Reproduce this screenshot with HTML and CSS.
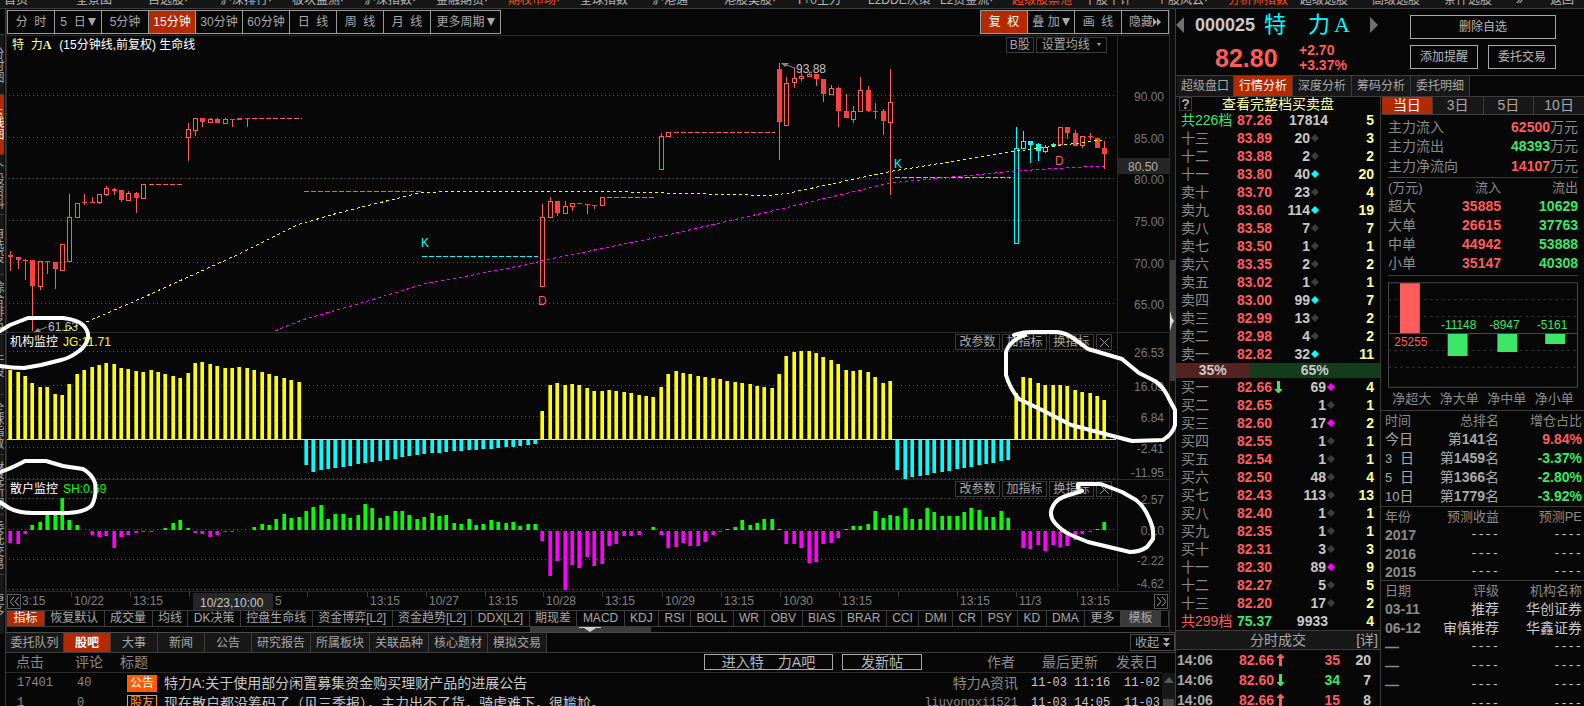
FILE: index.html
```html
<!DOCTYPE html>
<html lang="zh-CN">
<head>
<meta charset="utf-8">
<title>特力A 000025</title>
<link rel="stylesheet" href="styles.css">
</head>
<body>
<div class="app">
  <nav class="menu">
    <a href="#">首页</a><a href="#">全景图</a><a href="#">自选股·</a><a href="#">沪深排行·</a><a href="#">板块监测·</a><a href="#">沪深指数·</a><a href="#">金融期货·</a><a href="#" class="hot">期权市场·</a><a href="#">全球指数</a><a href="#">沪港通</a><a href="#">港股美股·</a><a href="#">T+0主力</a><a href="#">L2DDE决策</a><a href="#">L2资金流·</a><a href="#" class="hot">超级股票池</a><a href="#">千股千评</a><a href="#">个股风云·</a><a href="#" class="hot">分析师指数</a><a href="#">超级选股</a><a href="#">高级选股</a><a href="#">条件选股</a><a href="#" class="narrow">»</a><a href="#" class="narrow">返回</a>
  </nav>

  <div class="body">
    <aside class="side">
      <div class="side-gap"></div>
      <button>分时图</button><button class="on">K线图</button><button>个股资料</button><button>自选股</button><button>综合排名</button><button>牛股</button><button>全球指数</button><button>财经新闻</button><button>委托交易</button><button>更多</button>
    </aside>

    <main class="center">
      <div class="upper">
        <div class="charts">
          <div class="toolbar">
            <div class="btns periods">
              <button>分&nbsp; 时</button><button>5 &nbsp;日<i class="tri"></i></button><button>5分钟</button><button class="on">15分钟</button><button>30分钟</button><button>60分钟</button><button>日&nbsp; 线</button><button>周&nbsp; 线</button><button>月&nbsp; 线</button><button class="wide">更多周期<i class="tri"></i></button>
            </div>
            <div class="btns">
              <button class="on">复&nbsp; 权</button><button>叠 加<i class="tri"></i></button><button>画&nbsp; 线</button><button>隐藏<i class="tri right"></i><i class="tri right"></i></button>
            </div>
          </div>

          <section class="panel">
            <svg class="plot price" id="price" viewBox="7 36 1110 296" preserveAspectRatio="none"></svg>
            <svg class="axis price" viewBox="1118 36 51 296">
              <rect x="1118" y="158" width="51" height="16" fill="#262626"/>
              <g text-anchor="end">
                <text x="1164" y="101">90.00</text><text x="1164" y="143">85.00</text><text x="1158" y="171" fill="#b0b0b0">80.50</text><text x="1164" y="184">80.00</text><text x="1164" y="226">75.00</text><text x="1164" y="268">70.00</text><text x="1164" y="309">65.00</text>
              </g>
            </svg>
            <h2 class="panel-title"><span class="pale">特&nbsp; 力<b>A</b></span>(15分钟线,前复权) 生命线</h2>
            <div class="panel-tools first"><button>B股</button><button>设置均线 <i class="tri small"></i></button></div>
          </section>

          <section class="panel">
            <svg class="plot inst" id="inst" viewBox="7 333 1110 146" preserveAspectRatio="none"></svg>
            <svg class="axis inst" viewBox="1118 333 51 146">
              <g text-anchor="end"><text x="1164" y="357">26.53</text><text x="1164" y="391">16.09</text><text x="1164" y="422">6.84</text><text x="1164" y="453">-2.41</text><text x="1164" y="477">-11.95</text></g>
            </svg>
            <h2 class="panel-title low">机构监控<span class="yellow">JG:11.71</span></h2>
            <div class="panel-tools"><button>改参数</button><button>加指标</button><button>换指标</button><button class="x" aria-label="关闭"><svg width="9" height="9"><path d="M0 0L9 9M9 0L0 9" stroke="#999" fill="none"/></svg></button></div>
          </section>

          <section class="panel">
            <svg class="plot retail" id="retail" viewBox="7 480 1110 111" preserveAspectRatio="none"></svg>
            <svg class="axis retail" viewBox="1118 480 51 111">
              <g text-anchor="end"><text x="1164" y="504">2.57</text><text x="1164" y="535">0.10</text><text x="1164" y="565">-2.22</text><text x="1164" y="588">-4.62</text></g>
            </svg>
            <h2 class="panel-title low">散户监控<span class="green">SH:0.69</span></h2>
            <div class="panel-tools"><button>改参数</button><button>加指标</button><button>换指标</button><button class="x" aria-label="关闭"><svg width="9" height="9"><path d="M0 0L9 9M9 0L0 9" stroke="#999" fill="none"/></svg></button></div>
          </section>

          <div class="timeline">
            <svg id="time" viewBox="7 592 1162 18" preserveAspectRatio="none"></svg>
            <button class="prev" aria-label="向前"><svg width="9" height="9"><path d="M4 0L0 4.500L4 9M9 0L5 4.500L9 9" stroke="#aaa" fill="none"/></svg></button>
            <button class="next" aria-label="向后"><svg width="9" height="9"><path d="M0 0L4 4.500L0 9M5 0L9 4.500L5 9" stroke="#aaa" fill="none"/></svg></button>
          </div>

          <div class="indicators">
            <button class="on">指标</button><button>恢复默认</button><button>成交量</button><button>均线</button><button>DK决策</button><button>控盘生命线</button><button>资金博弈[L2]</button><button>资金趋势[L2]</button><button>DDX[L2]</button><button>期现差</button><button>MACD</button><button>KDJ</button><button>RSI</button><button>BOLL</button><button>WR</button><button>OBV</button><button>BIAS</button><button>BRAR</button><button>CCI</button><button>DMI</button><button>CR</button><button>PSY</button><button>KD</button><button>DMA</button><button>更多</button><button class="tpl">模板</button>
          </div>
          <div class="grip"><span><svg width="22" height="5"><path d="M0 0H22V1H17L11 5L5 1H0Z" fill="#ccc"/></svg></span></div>
        </div>
        <div class="vbar"><span></span><svg width="4" height="20"><path d="M0 0L2 7L4 10L2 13L0 20Z" fill="#ddd"/></svg></div>
      </div>

      <section class="news">
        <div class="news-tabs">
          <button class="w57">委托队列</button><button class="on w47">股吧</button><button class="w47">大事</button><button class="w47">新闻</button><button class="w47">公告</button><button>研究报告</button><button>所属板块</button><button>关联品种</button><button>核心题材</button><button>模拟交易</button>
          <button class="fold">收起<svg width="7" height="10"><path d="M0 0H7L3.500 4ZM0 5H7L3.500 9Z" fill="#aaa"/></svg></button>
        </div>
        <div class="news-body">
          <table>
            <thead><tr><th class="n1">点击</th><th class="n2">评论</th><th><div class="title-head">标题<span><button class="enter">进入特　力A吧</button><button class="post">发新帖</button></span></div></th><th class="n4">作者</th><th class="n5">最后更新</th><th class="n6">发表日</th></tr></thead>
            <tbody>
              <tr><td>17401</td><td>40</td><td class="t"><span class="tag solid">公告</span>特力A:关于使用部分闲置募集资金购买理财产品的进展公告</td><td>特力A资讯</td><td class="w">11-03 11:16</td><td class="w">11-02</td></tr>
              <tr><td>1</td><td>0</td><td class="t"><span class="tag">股友</span>现在散户都没筹码了（见三季报），主力出不了货，骑虎难下，很尴尬。</td><td class="m">liuyongxi1521</td><td class="w">11-03 14:05</td><td class="w">11-03</td></tr>
            </tbody>
          </table>
          <div class="scroll"><i></i><span></span></div>
        </div>
      </section>
    </main>

    <aside class="quote">
      <header class="quote-head">
        <div class="ident">
          <div class="name"><i class="nav-l"></i><span class="code">000025</span><span class="cn">特　力<b>A</b></span><i class="nav-r"></i></div>
          <div class="px"><strong>82.80</strong><span>+2.70<br>+3.37%</span></div>
        </div>
        <div class="acts"><button class="full">删除自选</button><button>添加提醒</button><button>委托交易</button></div>
      </header>
      <div class="qtabs"><button>超级盘口</button><button class="on">行情分析</button><button>深度分析</button><button>筹码分析</button><button>委托明细</button></div>
      <div class="cols">
        <div class="book">
          <div class="book-title"><button aria-label="帮助">?</button><a href="#">查看完整档买卖盘</a></div>
          <table>
            <tr><td class="g s">共226档</td><td class="r">87.26</td><td></td><td class="all" colspan="2">17814</td><td>5</td></tr>
            <tr><td>十三</td><td class="r">83.89</td><td></td><td>20</td><td><i></i></td><td>3</td></tr>
            <tr><td>十二</td><td class="r">83.88</td><td></td><td>2</td><td><i></i></td><td>2</td></tr>
            <tr><td>十一</td><td class="r">83.80</td><td></td><td>40</td><td><i class="c"></i></td><td>20</td></tr>
            <tr><td>卖十</td><td class="r">83.70</td><td></td><td>23</td><td><i></i></td><td>4</td></tr>
            <tr><td>卖九</td><td class="r">83.60</td><td></td><td>114</td><td><i class="c"></i></td><td>19</td></tr>
            <tr><td>卖八</td><td class="r">83.58</td><td></td><td>7</td><td><i></i></td><td>7</td></tr>
            <tr><td>卖七</td><td class="r">83.50</td><td></td><td>1</td><td><i></i></td><td>1</td></tr>
            <tr><td>卖六</td><td class="r">83.35</td><td></td><td>2</td><td><i></i></td><td>2</td></tr>
            <tr><td>卖五</td><td class="r">83.02</td><td></td><td>1</td><td><i></i></td><td>1</td></tr>
            <tr><td>卖四</td><td class="r">83.00</td><td></td><td>99</td><td><i class="c"></i></td><td>7</td></tr>
            <tr><td>卖三</td><td class="r">82.99</td><td></td><td>13</td><td><i></i></td><td>2</td></tr>
            <tr><td>卖二</td><td class="r">82.98</td><td></td><td>4</td><td><i></i></td><td>2</td></tr>
            <tr><td>卖一</td><td class="r">82.82</td><td></td><td>32</td><td><i class="c"></i></td><td>11</td></tr>
          </table>
          <div class="ratio"><span class="sell">35%</span><span class="buy">65%</span></div>
          <table>
            <tr><td>买一</td><td class="r">82.66</td><td><svg class="arr" viewBox="0 0 7 12"><path d="M2 0H5V8H7V9L4 12H3L0 9V8H2Z" fill="#3ce666"/></svg></td><td>69</td><td><i class="m"></i></td><td>4</td></tr>
            <tr><td>买二</td><td class="r">82.65</td><td></td><td>1</td><td><i></i></td><td>1</td></tr>
            <tr><td>买三</td><td class="r">82.60</td><td></td><td>17</td><td><i class="m"></i></td><td>2</td></tr>
            <tr><td>买四</td><td class="r">82.55</td><td></td><td>1</td><td><i></i></td><td>1</td></tr>
            <tr><td>买五</td><td class="r">82.54</td><td></td><td>1</td><td><i></i></td><td>1</td></tr>
            <tr><td>买六</td><td class="r">82.50</td><td></td><td>48</td><td><i></i></td><td>4</td></tr>
            <tr><td>买七</td><td class="r">82.43</td><td></td><td>113</td><td><i></i></td><td>13</td></tr>
            <tr><td>买八</td><td class="r">82.40</td><td></td><td>1</td><td><i></i></td><td>1</td></tr>
            <tr><td>买九</td><td class="r">82.35</td><td></td><td>1</td><td><i></i></td><td>1</td></tr>
            <tr><td>买十</td><td class="r">82.31</td><td></td><td>3</td><td><i></i></td><td>3</td></tr>
            <tr><td>十一</td><td class="r">82.30</td><td></td><td>89</td><td><i class="m"></i></td><td>9</td></tr>
            <tr><td>十二</td><td class="r">82.27</td><td></td><td>5</td><td><i></i></td><td>5</td></tr>
            <tr><td>十三</td><td class="r">82.20</td><td></td><td>17</td><td><i></i></td><td>2</td></tr>
            <tr><td class="r s">共299档</td><td class="g">75.37</td><td></td><td class="all" colspan="2">9933</td><td>4</td></tr>
          </table>
          <div class="tick-head"><span>分时成交</span><a href="#">[详]</a></div>
          <table class="ticks">
            <tr><td>14:06</td><td class="r">82.66</td><td><svg class="arr" viewBox="0 0 7 12"><path d="M2 12H5V4H7V3L4 0H3L0 3V4H2Z" fill="#ff5c5c"/></svg></td><td class="r">35</td><td>20</td></tr>
            <tr><td>14:06</td><td class="r">82.60</td><td><svg class="arr" viewBox="0 0 7 12"><path d="M2 0H5V8H7V9L4 12H3L0 9V8H2Z" fill="#3ce666"/></svg></td><td class="g">34</td><td>7</td></tr>
            <tr><td>14:06</td><td class="r">82.66</td><td><svg class="arr" viewBox="0 0 7 12"><path d="M2 12H5V4H7V3L4 0H3L0 3V4H2Z" fill="#ff5c5c"/></svg></td><td class="r">15</td><td>8</td></tr>
          </table>
        </div>

        <div class="flow">
          <div class="dtabs"><button class="on">当日</button><button>3日</button><button>5日</button><button>10日</button></div>
          <dl class="main-flow">
            <div><dt>主力流入</dt><dd><b class="r">62500</b>万元</dd></div>
            <div><dt>主力流出</dt><dd><b class="g">48393</b>万元</dd></div>
            <div class="net"><dt>主力净流向</dt><dd><b class="r">14107</b>万元</dd></div>
          </dl>
          <table class="sizes">
            <tr><th>(万元)</th><th>流入</th><th>流出</th></tr>
            <tr><td>超大</td><td class="r">35885</td><td class="g">10629</td></tr>
            <tr><td>大单</td><td class="r">26615</td><td class="g">37763</td></tr>
            <tr><td>中单</td><td class="r">44942</td><td class="g">53888</td></tr>
            <tr><td>小单</td><td class="r">35147</td><td class="g">40308</td></tr>
          </table>
          <div class="net-chart">
            <svg viewBox="1388 282 191 106">
              <path d="M1388 299.500H1578M1388 316.500H1578M1388 350.500H1578M1388 367.500H1578" stroke="#333" stroke-dasharray="3 3" fill="none"/>
              <path d="M1388.500 282.500H1578.500V387.500H1388.500ZM1388 333.500H1578" stroke="#4a4a4a" fill="none"/>
              <rect x="1400" y="283" width="20" height="50" fill="#ff5c5c"/>
              <path d="M1448 334H1468V356H1448ZM1498 334H1518V352H1498ZM1546 334H1566V344H1546Z" fill="#3ce666"/>
              <g text-anchor="middle" fill="#3ce666"><text x="1411" y="346" fill="#ff5c5c">25255</text><text x="1459" y="329">-11148</text><text x="1505" y="329">-8947</text><text x="1553" y="329">-5161</text></g>
            </svg>
            <div class="net-labels"><span>净超大</span><span>净大单</span><span>净中单</span><span>净小单</span></div>
          </div>
          <table class="rank">
            <tr><th>时间</th><th>总排名</th><th>增仓占比</th></tr>
            <tr><td>今日</td><td>第<b>141</b>名</td><td class="r">9.84%</td></tr>
            <tr><td><small>3</small>&nbsp; 日</td><td>第<b>1459</b>名</td><td class="g">-3.37%</td></tr>
            <tr><td><small>5</small>&nbsp; 日</td><td>第<b>1366</b>名</td><td class="g">-2.80%</td></tr>
            <tr><td><small>10</small>日</td><td>第<b>1779</b>名</td><td class="g">-3.92%</td></tr>
          </table>
          <table class="years">
            <tr><th>年份</th><th>预测收益</th><th>预测PE</th></tr>
            <tr><td>2017</td><td>----</td><td>----</td></tr>
            <tr><td>2016</td><td>----</td><td>----</td></tr>
            <tr class="end"><td>2015</td><td>----</td><td>----</td></tr>
          </table>
          <table class="rates">
            <tr><th>日期</th><th>评级</th><th>机构名称</th></tr>
            <tr><td>03-11</td><td>推荐</td><td>华创证券</td></tr>
            <tr><td>06-12</td><td>审慎推荐</td><td>华鑫证券</td></tr>
            <tr class="none"><td>—</td><td>----</td><td>----</td></tr>
            <tr class="none"><td>—</td><td>----</td><td>----</td></tr>
            <tr class="none"><td>—</td><td>----</td><td>----</td></tr>
            <tr class="none"><td></td><td>----</td><td>----</td></tr>
          </table>
        </div>
      </div>
    </aside>
  </div>

  <svg class="marks" viewBox="0 0 1584 706">
    <path d="M0 331L10 325L28 318L63 318Q78 320 83 325Q89 331 88 338Q86 346 79 351Q70 358 61 360L41 365L24 368Q12 368 0 366"/>
    <path d="M0 472Q10 469 25 461L46 461L63 466L83 469Q92 474 95 483Q97 495 92 505Q86 512 68 513L34 513Q18 513 9 508L0 502"/>
    <path d="M1014 335Q1022 332 1032 332L1057 332Q1066 333 1073 338L1088 349L1122 359L1139 373L1155 381Q1162 386 1166 393L1175 410L1175 425Q1173 434 1163 440L1132 441L1109 435L1071 425L1046 412L1019 399Q1010 389 1006 375L1006 352Q1009 341 1025 335"/>
    <path d="M1082 491L1069 495Q1057 498 1053 506Q1048 515 1055 523Q1062 531 1071 535L1088 542L1130 552Q1140 552 1147 547L1153 539Q1154 528 1149 518Q1144 506 1136 500L1122 492L1101 484L1078 484V488"/>
  </svg>
</div>
<script src="chart.js"></script>
</body>
</html>
```
FILE: styles.css
```css
* { box-sizing: border-box; }
body {
  margin: 0;
  background: #070707;
  color: #8a8a8a;
  font: 12px/16px "Liberation Sans", "Noto Sans CJK SC", sans-serif;
}
button {
  margin: 0;
  padding: 0;
  border: 0;
  background: none;
  color: #a8a8a8;
  font: inherit;
  white-space: nowrap;
}
a { color: inherit; text-decoration: none; }
i { font-style: normal; }
table { border-collapse: collapse; table-layout: fixed; width: 100%; }
td, th { padding: 0; font-weight: normal; white-space: nowrap; }
svg { display: block; }
svg text { font: 12px "Liberation Sans", sans-serif; }

.app { position: relative; display: flex; flex-direction: column; height: 100vh; min-width: 1200px; overflow: hidden; }

.menu {
  flex: none;
  display: flex;
  align-items: flex-end;
  height: 9px;
  padding-left: 4px;
  overflow: hidden;
  background: #161616;
  border-bottom: 1px solid #3c3c3c;
  color: #b8b8b8;
}
.menu a { flex: 0 1 72px; white-space: nowrap; }
.menu .hot { color: #ff4a10; }
.menu .narrow { flex-basis: 34px; }

.body { flex: 1; display: flex; min-height: 0; }

.side { flex: none; width: 6px; overflow: hidden; border-right: 1px solid #3c3c3c; }
.side-gap { height: 25px; }
.side button {
  display: block;
  width: 14px;
  height: 60px;
  margin-left: -10px;
  background: #181818;
  border-top: 1px solid #3c3c3c;
  writing-mode: vertical-rl;
  line-height: 12px;
}
.side .on { background: #b42a00; color: #fff; }

.center { flex: 1; min-width: 0; display: flex; flex-direction: column; }
.upper { flex: none; display: flex; }
.charts { flex: 1; min-width: 0; border-left: 1px solid #2a2a2a; }

.toolbar { display: flex; justify-content: space-between; height: 27px; padding-top: 1px; border-bottom: 1px solid #2a2a2a; }
.btns { display: flex; height: 24px; border: 1px solid #9a9a9a; }
.btns button { display: flex; align-items: center; justify-content: center; width: 47px; border-left: 1px solid #9a9a9a; }
.btns button:first-child { border-left: 0; width: 46px; }
.btns .wide { width: 70px; }
.btns .on, .indicators .on, .news-tabs .on, .qtabs .on, .dtabs .on { background: #b42a00; color: #fff; }
.tri { display: inline-block; margin-left: 2px; border: 4px solid transparent; border-top: 8px solid #a8a8a8; border-bottom: 0; }
.tri.right { margin-left: 0; border: 4px solid transparent; border-left: 4px solid #a8a8a8; border-right: 0; }
.tri.small { margin: 0 0 3px 4px; border-width: 3px 2px 0; }

.panel { position: relative; display: flex; }
.plot { flex: 1; min-width: 0; }
.plot polyline { shape-rendering: crispEdges; }
.axis { flex: none; width: 52px; border-left: 1px solid #2a2a2a; }
.axis text { fill: #787878; }
.axis text[fill] { fill: #b0b0b0; }
.price { height: 296px; }
.inst { height: 147px; border-top: 1px solid #2a2a2a; }
.retail { height: 112px; border-top: 1px solid #2a2a2a; }
.panel-title { position: absolute; top: 1px; left: 5px; margin: 0; color: #fff; font: inherit; }
.panel-title.low { top: 2px; left: 3px; }
.panel-title span { margin-left: 5px; }
.panel-title .pale { margin: 0 8px 0 0; color: #ffff9c; }
.pale b { font-family: "Liberation Serif", serif; }
.yellow { color: #ff0; }
.green { color: #0f0; }
.panel-tools { position: absolute; top: 2px; right: 57px; display: flex; gap: 2px; }
.panel-tools.first { top: 1px; right: 62px; }
.panel-tools button { width: 45px; height: 16px; border: 1px solid #3c3c3c; line-height: 14px; }
.panel-tools.first button { width: auto; padding: 0 5px; }
.panel-tools.first button:first-child { padding: 0 3px; }
.panel-tools button.x { width: 16px; padding-left: 3px; }

.timeline { position: relative; height: 19px; border-top: 1px solid #2a2a2a; }
.timeline svg { width: 100%; height: 18px; }
.timeline #time text { fill: #808080; }
.timeline #time .now { fill: #c8c8c8; }
.timeline button { position: absolute; top: 2px; width: 14px; height: 15px; padding: 2px; border: 1px solid #5a5a5a; background: #070707; }
.timeline button svg { width: 9px; height: 9px; }
.prev { left: 0; }
.next { right: 1px; }

.indicators { display: flex; height: 17px; padding-right: 7px; border: 1px solid #3c3c3c; border-left: 0; overflow: hidden; }
.indicators button { flex: 1 0 auto; padding: 0 5px; border-right: 1px solid #3c3c3c; line-height: 15px; }
.indicators .on { padding: 0 6px; }
.indicators .tpl { padding: 0 7px; background: #3a3a3a; }
.grip { display: flex; height: 5px; }
.grip span { width: 121px; margin-left: 45%; padding-left: 49px; background: #3c3c3c; }

.vbar { position: relative; flex: none; width: 6px; padding-top: 251px; background: #0d0d0d; border-left: 1px solid #2a2a2a; }
.vbar span { display: block; height: 121px; background: #3c3c3c; }
.vbar svg { position: absolute; top: 302px; left: 0; }

.news-tabs { display: flex; height: 21px; border-top: 1px solid #4a4a4a; border-bottom: 1px solid #3c3c3c; }
.news-tabs button { width: 59px; border-right: 1px solid #3c3c3c; background: #181818; }
.news-tabs .w57 { width: 58px; }
.news-tabs .w47 { width: 47px; }
.news-tabs .on { background: #b42a00; font-weight: bold; }
.news-tabs .fold { display: flex; align-items: center; gap: 4px; width: 45px; height: 17px; margin: 1px 0 0 auto; padding: 0 4px; border: 1px solid #4a4a4a; background: none; }
.fold svg { flex: none; }
.news-body { display: flex; align-items: flex-start; }
.news table { flex: 1; font-size: 14px; text-align: left; }
.news th { height: 19px; border-bottom: 1px solid #2a2a2a; line-height: 18px; }
.news td { height: 20px; font-family: "Liberation Mono", "Noto Sans CJK SC", monospace; font-size: 12px; line-height: 20px; }
.news .n1 { width: 69px; padding-left: 10px; }
.news .n2 { width: 45px; }
.news .n4 { width: 98px; text-align: right; padding-right: 5px; }
.news .n5 { width: 96px; text-align: right; padding-right: 18px; }
.news .n6 { width: 46px; }
.news td:nth-child(1) { padding-left: 11px; }
.news td:nth-child(2) { padding-left: 2px; }
.news td.t { padding-left: 7px; color: #c8c8c8; overflow: hidden; }
.news td:nth-child(4) { text-align: right; padding-right: 2px; }
.news td:nth-child(4), .news td.t { font-family: "Liberation Sans", "Noto Sans CJK SC", sans-serif; font-size: 14px; }
.news td.m:nth-child(4) { font-family: "Liberation Mono", monospace; font-size: 12px; }
.news td.w { color: #c8c8c8; }
.news td:nth-child(5) { padding-left: 11px; }
.news td:nth-child(6) { padding-left: 8px; }
.title-head { display: flex; justify-content: space-between; }
.title-head span { display: flex; gap: 9px; }
.title-head button { height: 16px; margin-top: 1px; border: 1px solid #a8a8a8; font-size: 14px; line-height: 14px; color: #b8b8b8; }
.enter { width: 129px; }
.post { width: 80px; }
.tag { display: inline-block; width: 30px; height: 17px; margin: 2px 7px 0 0; border: 1px solid #ff9a20; color: #ff9a20; font-size: 12px; line-height: 15px; text-align: center; vertical-align: top; }
.tag.solid { border-color: #ff5a00; background: #ff5a00; color: #fff; }
.scroll { width: 13px; margin-top: 20px; padding: 4px 1px; background: #181818; }
.scroll i { display: block; margin: 0 1px; width: 0; border: 5px solid transparent; border-top: 0; border-bottom: 6px solid #5a5a5a; }
.scroll span { display: block; height: 40px; margin-top: 16px; background: #4a4a4a; }

.quote { flex: none; width: 409px; border-left: 1px solid #3c3c3c; overflow: hidden; }
.quote-head { display: flex; height: 66px; }
.ident { width: 234px; }
.name { display: flex; align-items: center; height: 32px; }
.nav-l { border: 8px solid transparent; border-left: 0; border-right: 8px solid #707070; }
.nav-r { margin-left: auto; margin-right: 32px; border: 8px solid transparent; border-right: 0; border-left: 8px solid #707070; }
.code { margin-left: 11px; color: #c8c8c8; font-size: 18px; font-weight: bold; line-height: 24px; }
.cn { margin-left: 9px; color: #0ff; font-size: 22px; line-height: 28px; }
.cn b { margin-left: 4px; font-family: "Liberation Serif", serif; font-weight: normal; }
.px { display: flex; color: #ff5c5c; font-size: 14px; font-weight: bold; line-height: 15px; }
.px strong { width: 123px; padding-left: 39px; font-size: 25px; line-height: 34px; }
.px span { padding-top: 2px; }
.acts { display: grid; grid-template-columns: 68px 68px; grid-auto-rows: 24px; gap: 6px 10px; padding-top: 6px; }
.acts button { border: 1px solid #a8a8a8; color: #b8b8b8; }
.acts .full { grid-column: 1 / 3; }
.qtabs { display: flex; height: 22px; border-top: 1px solid #3c3c3c; border-bottom: 1px solid #3c3c3c; padding-left: 1px; }
.qtabs button { width: 59px; border-right: 1px solid #3c3c3c; background: #181818; line-height: 20px; }
.qtabs button:first-child { width: 57px; }

.cols { display: flex; }
.book { flex: none; width: 205px; border-right: 1px solid #3c3c3c; color: #c8c8c8; font-size: 14px; }
.r { color: #ff5c5c; }
.g { color: #3ce666; }
.book-title { display: flex; height: 14px; line-height: 14px; color: #ffff9c; }
.book-title button { width: 13px; height: 14px; margin: 0 30px 0 3px; border: 1px solid #3c3c3c; font-weight: bold; line-height: 12px; }
.book td { height: 18px; line-height: 18px; text-align: right; font-weight: bold; }
.book td:nth-child(1) { width: 50px; padding-left: 5px; text-align: left; font-weight: normal; color: #8a8a8a; }
.book td:nth-child(1).g { color: #3ce666; }
.book td:nth-child(1).r { color: #ff5c5c; }
.book td:nth-child(2) { width: 46px; }
.book td:nth-child(3) { width: 12px; }
.book td:nth-child(4) { width: 42px; }
.book td.all { width: 52px; padding-right: 8px; }
.book td:last-child { width: 44px; padding-right: 6px; color: #ffff9c; }
.book td i { display: block; width: 8px; height: 8px; margin-left: 1px; background: #3c3c3c; clip-path: polygon(50% 0, 100% 50%, 50% 100%, 0 50%); }
.book td i.c { background: #0ff; }
.book td i.m { background: #f0f; }
.arr { width: 7px; height: 12px; margin-left: 3px; }
.ratio { display: flex; height: 15px; color: #c8c8c8; font-weight: bold; line-height: 15px; text-align: center; }
.sell { width: 36%; background: #552222; }
.buy { flex: 1; background: #143c1c; }
.tick-head { display: flex; height: 20px; border-top: 1px solid #3c3c3c; border-bottom: 1px solid #3c3c3c; background: #181818; color: #a8a8a8; line-height: 18px; }
.tick-head span { flex: 1; padding-left: 50px; text-align: center; }
.tick-head a { width: 50px; padding-right: 2px; text-align: right; }
.book .ticks td { height: 20px; }
.book .ticks td:nth-child(1) { padding-left: 1px; font-weight: bold; color: #a8a8a8; }
.book .ticks td:nth-child(2) { width: 48px; }
.book .ticks td:nth-child(4) { width: 54px; }
.book .ticks td:last-child { width: auto; padding-right: 9px; color: #c8c8c8; }

.flow { flex: 1; min-width: 0; font-size: 14px; }
.dtabs { display: flex; height: 18px; margin-left: 1px; }
.dtabs button { flex: 1; border-right: 1px solid #3c3c3c; border-bottom: 1px solid #3c3c3c; background: #181818; line-height: 17px; }
.dtabs button:last-child { border-right: 0; }
.main-flow { margin: 0 6px 0 7px; padding-top: 3px; border-bottom: 1px solid #3c3c3c; }
.main-flow div { display: flex; justify-content: space-between; height: 19px; line-height: 19px; }
.main-flow .net { height: 21px; line-height: 21px; }
.main-flow dd { margin: 0; }
.flow td, .flow th { height: 19px; line-height: 19px; text-align: right; }
.flow th { font-size: 13px; }
.flow td:first-child, .flow th:first-child { text-align: left; }
.sizes { width: 190px; margin: 0 6px 0 7px; }
.sizes tr > :nth-child(1) { width: 53px; }
.sizes tr > :nth-child(2) { width: 60px; }
.sizes td:nth-child(n+2), .rank td:nth-child(3) { font-weight: bold; }
.net-chart { margin: 2px 6px 0 7px; padding-top: 6px; border-top: 1px solid #3c3c3c; }
.net-chart svg { width: 100%; height: 106px; }
.net-labels { display: flex; justify-content: space-around; height: 22px; font-size: 13px; line-height: 21px; }
.rank, .years, .rates { width: 100%; border-top: 1px solid #3c3c3c; }
.rank tr > :first-child, .years tr > :first-child, .rates tr > :first-child { width: 54px; padding-left: 4px; }
.rank td { color: #a8a8a8; }
.rank td.r { color: #ff5c5c; }
.rank td.g { color: #3ce666; }
.rank small { font-size: 13px; }
.rank tr > :nth-child(2), .years tr > :nth-child(2), .rates tr > :nth-child(2) { width: 64px; }
.rank tr > :last-child, .years tr > :last-child, .rates tr > :last-child { padding-right: 2px; }
.years td:first-child, .rates td:first-child { font-weight: bold; }
.years td:nth-child(n+2), .rates td:nth-child(n+2) { color: #c8c8c8; }
.years td:nth-child(n+2), .rates .none td:nth-child(n+2) { font-family: "Liberation Mono", monospace; font-size: 12px; }
.flow .years .end td { height: 16px; line-height: 16px; }

.marks { position: absolute; top: 0; left: 0; width: 1584px; height: 706px; pointer-events: none; }
.marks path { fill: none; stroke: #fff; stroke-width: 4; stroke-linejoin: round; stroke-linecap: round; }
```
FILE: chart.js
```js
const X = i => Math.round(10.2 + 7.393 * i);
const grid = ys => ys.map(y => `<path d="M9 ${y}.5H1116" stroke="#555" stroke-dasharray="1 3"/>`).join('');

// Candles: index, wick top, body top, body bottom, wick bottom, kind (h hollow, f filled)
const candles = [
  [0,251,255,257,271,'f'],[1,257,257,260,269,'f'],[2,259,260,261,280,'f'],[3,260,260,286,331,'f'],[4,261,261,287,290,'h'],
  [5,261,261,262,274,'f'],[6,262,262,269,289,'f'],[7,244,244,271,271,'h'],[8,194,217,262,262,'h'],[9,203,203,218,218,'h'],
  [10,194,202,203,205,'f'],[11,197,202,203,203,'f'],[12,194,194,203,204,'h'],[13,186,188,195,196,'h'],[14,188,189,191,195,'f'],
  [15,190,190,200,202,'f'],[16,191,193,201,201,'h'],[17,192,193,198,213,'f'],[18,184,184,199,199,'h'],
  [24,123,129,138,161,'h'],[25,118,118,131,136,'h'],[26,118,118,122,127,'f'],[27,118,119,123,123,'h'],[28,118,119,123,123,'f'],
  [29,118,119,124,124,'h'],[30,119,119,120,127,'f'],[31,118,118,120,120,'f'],[32,118,118,119,127,'f'],
  [72,204,217,287,287,'h'],[73,197,201,218,218,'h'],[74,201,201,213,216,'f'],[75,201,206,214,214,'h'],[76,203,203,207,211,'h'],
  [77,203,203,204,204,'f'],[78,204,204,205,214,'f'],[79,205,205,206,209,'f'],[80,197,197,206,206,'h'],
  [88,133,136,170,170,'h'],[89,132,132,137,137,'h'],
  [104,63,69,122,160,'f'],[105,77,83,126,126,'h'],[106,68,78,83,88,'h'],[107,69,76,79,81,'h'],[108,72,74,77,77,'h'],
  [109,74,74,79,86,'f'],[110,79,79,94,102,'f'],[111,85,88,95,95,'h'],[112,87,88,111,127,'f'],[113,94,111,118,118,'f'],
  [114,106,111,120,123,'h'],[115,77,90,112,112,'h'],[116,86,90,111,112,'f'],[117,103,111,112,119,'f'],[118,109,111,121,135,'f'],
  [119,69,102,123,195,'h'],
  [136,127,148,244,244,'h'],[137,131,141,149,149,'h'],[138,141,141,145,163,'f'],[139,143,144,151,161,'f'],[140,145,147,152,153,'h'],[141,143,144,146,147,'h'],
  [142,127,127,145,145,'h'],[143,127,127,133,139,'f'],[144,130,133,146,146,'f'],[145,136,136,146,148,'h'],[146,133,136,137,140,'f'],[147,138,138,148,148,'f'],[148,141,148,154,169,'f']
];

const candle = ([i, hi, top, bottom, lo, kind]) => {
  const x = X(i);
  const cyan = i >= 136 && i <= 141;
  const edge = cyan ? '#0ff' : '#ff5c5c';
  const wick = `<path d="M${x + .5} ${hi}V${top}M${x + .5} ${bottom}V${lo}" stroke="${edge}"/>`;
  return wick + (kind === 'h'
    ? `<rect x="${x - 1.5}" y="${top + .5}" width="4" height="${bottom - top - 1}" fill="none" stroke="${edge}"/>`
    : `<rect x="${x - 2}" y="${top}" width="5" height="${bottom - top}" fill="${cyan ? '#0ff' : '#ff4040'}"/>`);
};

const halts = [[149,183,184,'#ff5c5c'],[252,302,118,'#ff5c5c'],[304,421,191,'#ff5c5c'],[422,538,256,'#0ff'],[607,656,197,'#ff5c5c'],[674,775,132,'#ff5c5c'],[895,1011,177,'#0ff']]
  .map(([a, b, y, c]) => `<path d="M${a} ${y}.5H${b}" stroke="${c}" stroke-dasharray="5 2"/>`).join('');

const curve = (pts, c) => `<polyline points="${pts}" fill="none" stroke="${c}" stroke-dasharray="3 3"/>`;

document.getElementById('price').innerHTML =
  grid([95, 137, 178, 220, 262, 303]) + candles.map(candle).join('') + halts +
  curve('64,331 84,323 133,302 186,278 237,255 297,225 338,213 421,192.5 455,191.5 610,191.5 646,192.5 772,195.5 789,193 890,171.5 1017,151 1102,140', '#ff0') +
  curve('275,331 302,320 358,304 424,284 473,275 530,264 545,260 659,237 772,211 890,183 941,178 1017,171 1063,168 1104,166', '#f0f') +
  `<g fill="#c0c0c0"><text x="796" y="73">93.88</text><text x="48" y="331">61.63</text></g>
   <path d="M795 68L784 64M47 327L37 331" stroke="#888"/><path d="M781 63L789 63L785 67ZM34 332L38 328L41 332Z" fill="#888"/>
   <g fill="#0ff"><text x="421" y="247">K</text><text x="894" y="168">K</text></g>
   <g fill="#ff5c5c"><text x="538" y="305">D</text><text x="1055" y="165">D</text></g>`;

const inst = [
  370,372,376,383,387,387,394,395,384,374,370,367,365,363,364,368,369,371,372,370,372,374,376,378,373,363,362,364,366,368,368,367,368,370,372,374,376,378,380,382,
  465,472,470,469,468,467,466,464,463,462,461,460,459,457,456,455,454,453,453,452,451,451,450,450,449,449,448,447,447,446,445,444,
  411,385,383,385,384,385,388,391,391,390,391,392,393,395,396,397,
  387,374,371,373,374,376,377,378,379,381,382,383,384,386,387,388,
  374,356,352,351,351,353,357,360,364,370,371,370,372,377,383,381,
  470,479,477,476,475,473,472,471,469,468,467,465,464,463,461,460,
  393,377,378,383,385,385,385,386,390,392,393,396,400
];
const bar = (x, y, h, dark, lit) =>
  `<rect x="${x - 2}" y="${y}" width="4" height="${h}" fill="${dark}"/><rect x="${x - 1}" y="${y}" width="3" height="${h}" fill="${lit}"/>`;

document.getElementById('inst').innerHTML =
  grid([351, 385, 416, 447, 478]) +
  inst.map((y, i) => y < 439 ? bar(X(i), y, 439 - y, '#a0a000', '#ff0') : bar(X(i), 440, y - 440, '#00a0a0', '#0ff')).join('') +
  '<path d="M7 439.5H1116" stroke="#ddd"/>';

const retail = [
  -12,-13,-3,5,8,19,15,32,10,5,0,-4,-6,-5,-17,-6,-4,-2,-1,-1,0,2,7,10,2,-2,-3,-6,-4,-1,-1,0,0,3,6,5,11,16,12,13,
  19,23,25,11,16,16,12,15,26,22,12,14,19,19,15,11,13,17,14,15,7,6,11,5,6,10,8,7,8,4,6,6,
  -10,-45,-30,-59,-34,-37,-26,-35,-33,-15,-13,-5,-5,-4,0,3,-4,-17,-16,-12,-15,-15,-11,-4,-1,1,3,10,5,7,11,11,
  1,-13,-13,-17,-32,-31,-13,-12,-7,1,4,4,6,19,12,15,14,22,11,11,22,18,14,14,14,18,22,20,13,13,19,12,
  0,-17,-18,-14,-20,-14,-16,-15,-9,-3,-1,1,8
];
document.getElementById('retail').innerHTML =
  grid([498, 529, 559, 589]) +
  retail.map((v, i) => v > 0 ? bar(X(i), 530 - v, v, '#00a000', '#0f0') : bar(X(i), 531, -v, '#a000a0', '#f0f')).join('');

const ticks = [[71,'10/22'],[130,'13:15'],[189,''],[249,''],[307,''],[367,'13:15'],[426,'10/27'],[485,'13:15'],[543,'10/28'],[602,'13:15'],[662,'10/29'],[721,'13:15'],[780,'10/30'],[839,'13:15'],[898,''],[957,'13:15'],[1016,'11/3'],[1077,'13:15']];
document.getElementById('time').innerHTML =
  '<text x="22" y="605">3:15</text><text x="275" y="605">5</text>' +
  ticks.map(([x, t]) => `<path d="M${x}.5 591V597" stroke="#3c3c3c"/><text x="${x + 3}" y="605">${t}</text>`).join('') +
  '<rect x="193" y="593" width="80" height="17" fill="#262626"/><text class="now" x="200" y="607">10/23,10:00</text>';
```
